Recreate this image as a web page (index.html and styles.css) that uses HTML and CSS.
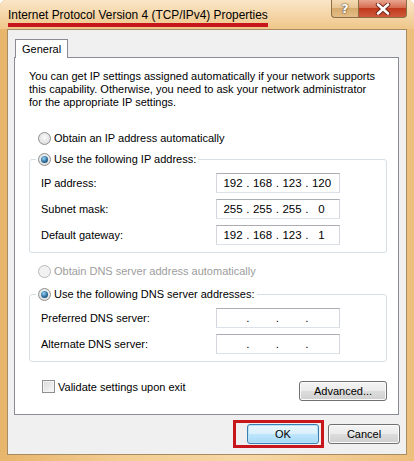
FILE: index.html
```html
<!DOCTYPE html>
<html lang="en">

<head>
    <meta charset="UTF-8">
    <meta name="viewport" content="width=device-width, initial-scale=1.0">
    <title>Internet Protocol Version 4 (TCP/IPv4) Properties</title>
    <link rel="stylesheet" href="styles.css">
</head>

<body>
    <div class="window">
        <div class="titlebar">
            <span class="title">Internet Protocol Version 4 (TCP/IPv4) Properties</span>
            <div class="caption">
                <span class="cap-btn help">?</span>
                <span class="cap-btn close">
                    <svg width="16" height="12" viewBox="0 0 16 12">
                        <path d="M3 1.5 L13 10.5 M13 1.5 L3 10.5" stroke="#6b2418" stroke-width="4.4" stroke-linecap="round" />
                        <path d="M3 1.5 L13 10.5 M13 1.5 L3 10.5" stroke="#ffffff" stroke-width="2.6" stroke-linecap="round" />
                    </svg>
                </span>
            </div>
        </div>

        <div class="client">
            <div class="tabs">
                <span class="tab">General</span>
            </div>

            <div class="panel">
                <p class="intro">You can get IP settings assigned automatically if your network supports<br>
                    this capability. Otherwise, you need to ask your network administrator<br>
                    for the appropriate IP settings.</p>

                <label class="opt first"><span class="radio"></span>Obtain an IP address automatically</label>

                <fieldset class="group">
                    <legend><label class="opt"><span class="radio on"></span>Use the following IP address:</label></legend>
                    <div class="row">
                        <span class="lbl">IP address:</span>
                        <div class="ipbox"><span class="oct">192</span><span class="dot">.</span><span class="oct">168</span><span class="dot">.</span><span class="oct">123</span><span class="dot">.</span><span class="oct">120</span></div>
                    </div>
                    <div class="row">
                        <span class="lbl">Subnet mask:</span>
                        <div class="ipbox"><span class="oct">255</span><span class="dot">.</span><span class="oct">255</span><span class="dot">.</span><span class="oct">255</span><span class="dot">.</span><span class="oct">0</span></div>
                    </div>
                    <div class="row">
                        <span class="lbl">Default gateway:</span>
                        <div class="ipbox"><span class="oct">192</span><span class="dot">.</span><span class="oct">168</span><span class="dot">.</span><span class="oct">123</span><span class="dot">.</span><span class="oct">1</span></div>
                    </div>
                </fieldset>

                <label class="opt disabled"><span class="radio"></span>Obtain DNS server address automatically</label>

                <fieldset class="group dns">
                    <legend><label class="opt"><span class="radio on"></span>Use the following DNS server addresses:</label></legend>
                    <div class="row">
                        <span class="lbl">Preferred DNS server:</span>
                        <div class="ipbox"><span class="oct"></span><span class="dot">.</span><span class="oct"></span><span class="dot">.</span><span class="oct"></span><span class="dot">.</span><span class="oct"></span></div>
                    </div>
                    <div class="row">
                        <span class="lbl">Alternate DNS server:</span>
                        <div class="ipbox"><span class="oct"></span><span class="dot">.</span><span class="oct"></span><span class="dot">.</span><span class="oct"></span><span class="dot">.</span><span class="oct"></span></div>
                    </div>
                </fieldset>

                <div class="foot">
                    <label class="check"><span class="box"></span>Validate settings upon exit</label>
                    <button class="btn advanced">Advanced...</button>
                </div>
            </div>

            <div class="actions">
                <span class="mark"><button class="btn default">OK</button></span>
                <button class="btn">Cancel</button>
            </div>
        </div>
    </div>
</body>

</html>
```

FILE: styles.css
```css
html,
body {
    margin: 0;
    padding: 0;
    background: #ffffff;
}

body {
    font-family: 'Liberation Sans', Arial, sans-serif;
    font-size: 11px;
    color: #000;
}

.window {
    width: 414px;
    height: 461px;
    box-sizing: border-box;
    padding: 0 7px 6px 7px;
    display: flex;
    flex-direction: column;
    background: linear-gradient(to right, #e8b56c, #f3cd92 30%, #f6d7a6 60%, #edbf7c);
    border-radius: 6px 6px 0 0;
}

/* title bar */
.titlebar {
    height: 29px;
    flex: none;
    display: flex;
    justify-content: space-between;
    align-items: flex-start;
    margin: 0 -7px;
    padding: 0 7px 0 8px;
    background: linear-gradient(#fae6c8, #f4d3a2 60%, #efc68a);
    border-radius: 6px 6px 0 0;
}

.title {
    margin-top: 8px;
    line-height: 14px;
    font-size: 11.9px;
    padding-bottom: 1px;
    border-bottom: 4px solid #c8161d;
}

.caption {
    display: flex;
}

.cap-btn {
    height: 18px;
    display: flex;
    align-items: center;
    justify-content: center;
    box-sizing: border-box;
    border: 1px solid #8b6d46;
    border-top: none;
}

.help {
    width: 27px;
    border-radius: 0 0 0 4px;
    border-right: none;
    background: linear-gradient(#f5dcb6, #e7c390 50%, #d8ab6e 50%, #e3bd86);
    color: #fff;
    font: bold 13px 'DejaVu Sans', sans-serif;
    text-shadow: 0 0 2px #5a4020, 0 0 1px #5a4020;
}

.close {
    width: 49px;
    border-radius: 0 0 4px 0;
    background: linear-gradient(#e9a58f, #d4664a 50%, #c0391c 50%, #d0593b);
}

/* client area */
.client {
    flex: 1;
    display: flex;
    flex-direction: column;
    background: #f0f0f0;
    border: 1px solid #a68b63;
    padding: 9px 7px 0 6px;
}

.tabs {
    display: flex;
    padding-left: 1px;
}

.tab {
    height: 19px;
    box-sizing: border-box;
    padding: 3px 6px 0 6px;
    background: #ffffff;
    border: 1px solid #898c95;
    border-bottom: none;
    margin-bottom: -1px;
    position: relative;
    z-index: 1;
}

.panel {
    background: #ffffff;
    border: 1px solid #898c95;
    padding: 12px 11px 13px 14px;
}

.intro {
    margin: 0;
    line-height: 13px;
}

/* radios */
.opt {
    display: flex;
    align-items: center;
    gap: 3px;
    height: 16px;
}

.opt.first {
    margin: 21px 0 0 9px;
}

.opt.disabled {
    margin: 10px 0 0 9px;
    color: #9d9d9d;
}

.radio {
    width: 13px;
    height: 13px;
    box-sizing: border-box;
    border-radius: 50%;
    border: 1px solid #8e8f8f;
    background: radial-gradient(circle at 50% 40%, #fbfbfb, #d4d4d4);
    position: relative;
}

.radio.on::after {
    content: '';
    position: absolute;
    inset: 2px;
    border-radius: 50%;
    background: radial-gradient(circle at 40% 35%, #9bd6f7, #2a6c9c 55%, #0d3a5c);
}

.opt.disabled .radio {
    border-color: #b8b8b8;
    background: #f2f2f2;
}

/* group boxes */
.group {
    margin: 5px 0 0 0;
    padding: 0 12px 7px 11px;
    border: 1px solid #d5dfe5;
    border-radius: 3px;
}

.group.dns {
    margin-top: 7px;
}

.group legend {
    margin-left: -5px;
    padding: 0 2px;
}

.row {
    display: flex;
    align-items: center;
    height: 20px;
    margin-top: 6px;
}

.lbl {
    width: 175px;
}

.ipbox {
    width: 124px;
    height: 20px;
    box-sizing: border-box;
    display: flex;
    align-items: center;
    padding-left: 5px;
    border: 1px solid;
    border-color: #abadb3 #d3d6dc #dde2e8 #d3d6dc;
    font-size: 11.5px;
}

.oct {
    width: 22px;
    text-align: center;
}

.dot {
    width: 7.5px;
    text-align: center;
}

/* footer of the panel */
.foot {
    display: flex;
    justify-content: space-between;
    align-items: flex-start;
    margin-top: 18px;
}

.check {
    display: flex;
    align-items: center;
    gap: 3px;
    margin-left: 13px;
    height: 13px;
}

.box {
    width: 13px;
    height: 13px;
    box-sizing: border-box;
    border: 1px solid #8e8f8f;
    background: linear-gradient(135deg, #d8d8d8, #fafafa);
    box-shadow: inset 0 0 0 1px #f4f4f4;
}

.btn {
    height: 20px;
    width: 72px;
    padding: 0;
    font-family: inherit;
    font-size: 11px;
    color: #000;
    border: 1px solid #707070;
    border-radius: 3px;
    background: linear-gradient(#f4f4f4, #ebebeb 48%, #dcdcdc 52%, #cfcfcf);
    box-shadow: inset 0 0 0 1px #fbfbfb;
}

.btn.advanced {
    width: 88px;
    margin-top: 1px;
}

.btn.default {
    border-color: #3c7fb1;
    background: linear-gradient(#eaf6fd, #d9f0fc 48%, #bee6fd 52%, #a7d9f5);
    box-shadow: inset 0 0 0 1px #b9e2f8;
}

/* dialog buttons */
.actions {
    display: flex;
    justify-content: flex-end;
    align-items: center;
    gap: 4px;
    margin: 5px -1px 0 0;
}

.mark {
    display: flex;
    padding: 1px 2px 1px 11px;
    border: 3px solid #c8161d;
}
```
